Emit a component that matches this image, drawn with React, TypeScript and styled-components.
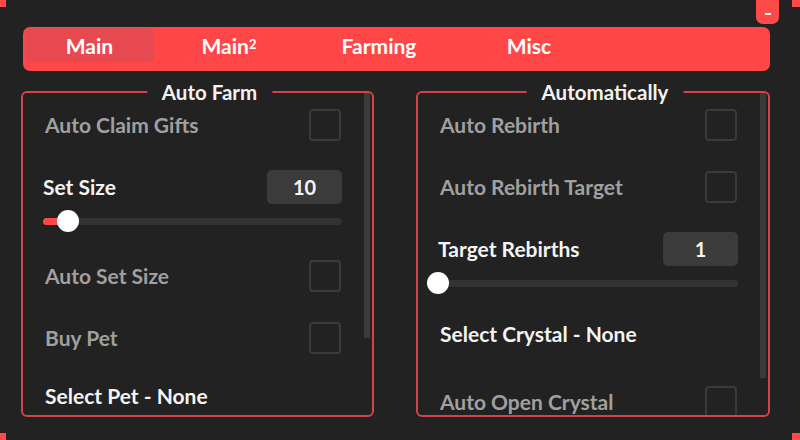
import React from 'react';
import styled, { createGlobalStyle } from 'styled-components';

const GlobalStyle = createGlobalStyle`
    html, body {
        margin: 0;
        padding: 0;
        background: #222222;
    }
    body {
        font-family: Lato, "Open Sans", sans-serif;
    }
`;

const Window = styled.div`
    position: relative;
    width: 800px;
    height: 440px;
    overflow: hidden;
    box-sizing: border-box;
    padding: 27px 30px 0 21px;
    background: #222222;
    display: flex;
    flex-direction: column;
`;

const Corner = styled.div<{ $v: 'top' | 'bottom'; $h: 'left' | 'right' }>`
    position: absolute;
    ${({ $v }) => $v}: 0;
    ${({ $h }) => $h}: 0;
    width: ${({ $h }) => ($h === 'left' ? 6 : 8)}px;
    height: 7px;
    background: #ff4a4a;
`;

const MinimizeButton = styled.div`
    position: absolute;
    left: 756px;
    top: -6px;
    width: 23px;
    height: 30px;
    border-radius: 7px;
    background: #ff4a4a;
    display: flex;
    justify-content: center;
    align-items: flex-end;
    padding-bottom: 9px;
    box-sizing: border-box;

    &::after {
        content: '';
        width: 6px;
        height: 2px;
        background: #ffffff;
    }
`;

const TabBar = styled.div`
    margin-left: 2px;
    width: 747px;
    height: 44px;
    box-sizing: border-box;
    padding: 1px 2px;
    border-radius: 7px;
    background: #ff4747;
    display: flex;
    align-items: flex-start;
`;

const Tab = styled.div<{ $width: number; $active?: boolean }>`
    width: ${({ $width }) => $width}px;
    height: 34px;
    border-radius: 5px;
    background: ${({ $active }) => ($active ? '#e64a50' : 'transparent')};
    color: #ffffff;
    font-size: 21px;
    font-weight: 700;
    display: flex;
    align-items: center;
    justify-content: center;

    sup {
        font-size: 13px;
        line-height: 0;
        position: relative;
        top: -1px;
    }
`;

const Panels = styled.div`
    margin-top: 20px;
    display: grid;
    grid-template-columns: 353px 354px;
    column-gap: 42px;
`;

const Panel = styled.section`
    position: relative;
    height: 326px;
    box-sizing: border-box;
    border: 2px solid #d5434a;
    border-radius: 6px;
    display: flex;
`;

const PanelTitle = styled.div`
    position: absolute;
    top: -13px;
    left: calc(50% + 12px);
    transform: translateX(-50%);
    padding: 0 15px;
    background: #222222;
    color: #f2f2f2;
    font-size: 20.5px;
    font-weight: 700;
    line-height: 24px;
    white-space: nowrap;
`;

const PanelBody = styled.div`
    flex: 1;
    overflow: hidden;
    padding-top: 1px;
    display: flex;
    flex-direction: column;
`;

const ScrollTrack = styled.div`
    width: 6px;
    margin-right: 2px;
`;

const ScrollThumb = styled.div<{ $height: number }>`
    height: ${({ $height }) => $height}px;
    background: #3a3a3a;
`;

const Label = styled.span<{ $muted?: boolean }>`
    color: ${({ $muted }) => ($muted ? '#a0a0a0' : '#f4f4f4')};
    font-size: 21px;
    font-weight: 700;
    line-height: 24px;
    white-space: nowrap;
`;

const ToggleRow = styled.div`
    flex: none;
    height: 62px;
    box-sizing: border-box;
    padding: 0 23px 0 22px;
    display: flex;
    align-items: center;
    justify-content: space-between;
`;

const Checkbox = styled.div`
    width: 32px;
    height: 32px;
    box-sizing: border-box;
    border: 2px solid #3a3a3a;
    border-radius: 4px;
`;

const SliderBlock = styled.div`
    flex: none;
    height: 89px;
    box-sizing: border-box;
    padding: 14px 22px 0 20px;
`;

const SliderHeader = styled.div`
    height: 34px;
    display: flex;
    align-items: center;
    justify-content: space-between;
`;

const ValueBox = styled.div`
    width: 75px;
    height: 34px;
    border-radius: 5px;
    background: #3b3b3b;
    color: #f4f4f4;
    font-size: 20px;
    font-weight: 700;
    display: flex;
    align-items: center;
    justify-content: center;
`;

const SliderArea = styled.div`
    margin-top: 6px;
    height: 22px;
    display: flex;
    align-items: center;
`;

const SliderTrack = styled.div`
    position: relative;
    flex: 1;
    height: 7px;
    border-radius: 4px;
    background: #333333;
`;

const SliderFill = styled.div`
    height: 100%;
    border-radius: 4px;
    background: #ff4747;
`;

const SliderKnob = styled.div`
    position: absolute;
    top: 50%;
    width: 22px;
    height: 22px;
    border-radius: 50%;
    background: #ffffff;
    transform: translate(-50%, -50%);
`;

const DropdownRow = styled.div`
    flex: none;
    height: 64px;
    box-sizing: border-box;
    padding: 15px 22px 0 22px;
`;

type Item =
    | { kind: 'toggle'; label: string }
    | { kind: 'slider'; label: string; value: number; min: number; max: number }
    | { kind: 'dropdown'; label: string };

interface Section {
    title: string;
    thumb: number;
    items: Item[];
}

const sections: Section[] = [
    {
        title: 'Auto Farm',
        thumb: 245,
        items: [
            { kind: 'toggle', label: 'Auto Claim Gifts' },
            { kind: 'slider', label: 'Set Size', value: 10, min: 1, max: 110 },
            { kind: 'toggle', label: 'Auto Set Size' },
            { kind: 'toggle', label: 'Buy Pet' },
            { kind: 'dropdown', label: 'Select Pet - None' },
        ],
    },
    {
        title: 'Automatically',
        thumb: 285,
        items: [
            { kind: 'toggle', label: 'Auto Rebirth' },
            { kind: 'toggle', label: 'Auto Rebirth Target' },
            { kind: 'slider', label: 'Target Rebirths', value: 1, min: 1, max: 100 },
            { kind: 'dropdown', label: 'Select Crystal - None' },
            { kind: 'toggle', label: 'Auto Open Crystal' },
        ],
    },
];

const tabs = [
    { label: 'Main', width: 129, active: true },
    { label: 'Main', sup: '2', width: 150 },
    { label: 'Farming', width: 150 },
    { label: 'Misc', width: 150 },
];

const Slider = ({ label, value, min, max }: { label: string; value: number; min: number; max: number }) => {
    const pct = ((value - min) / (max - min)) * 100;
    return (
        <SliderBlock>
            <SliderHeader>
                <Label>{label}</Label>
                <ValueBox>{value}</ValueBox>
            </SliderHeader>
            <SliderArea>
                <SliderTrack>
                    <SliderFill style={{ width: `${pct}%` }} />
                    <SliderKnob style={{ left: `${pct}%` }} />
                </SliderTrack>
            </SliderArea>
        </SliderBlock>
    );
};

const renderItem = (item: Item) => {
    switch (item.kind) {
        case 'toggle':
            return (
                <ToggleRow key={item.label}>
                    <Label $muted>{item.label}</Label>
                    <Checkbox />
                </ToggleRow>
            );
        case 'slider':
            return <Slider key={item.label} {...item} />;
        default:
            return (
                <DropdownRow key={item.label}>
                    <Label>{item.label}</Label>
                </DropdownRow>
            );
    }
};

export default function App() {
    return (
        <>
            <GlobalStyle />
            <Window>
                <Corner $v="top" $h="left" />
                <Corner $v="top" $h="right" />
                <Corner $v="bottom" $h="left" />
                <Corner $v="bottom" $h="right" />
                <MinimizeButton />
                <TabBar>
                    {tabs.map((tab, i) => (
                        <Tab key={i} $width={tab.width} $active={tab.active}>
                            {tab.label}
                            {tab.sup && <sup>{tab.sup}</sup>}
                        </Tab>
                    ))}
                </TabBar>
                <Panels>
                    {sections.map(section => (
                        <Panel key={section.title}>
                            <PanelTitle>{section.title}</PanelTitle>
                            <PanelBody>{section.items.map(renderItem)}</PanelBody>
                            <ScrollTrack>
                                <ScrollThumb $height={section.thumb} />
                            </ScrollTrack>
                        </Panel>
                    ))}
                </Panels>
            </Window>
        </>
    );
}
